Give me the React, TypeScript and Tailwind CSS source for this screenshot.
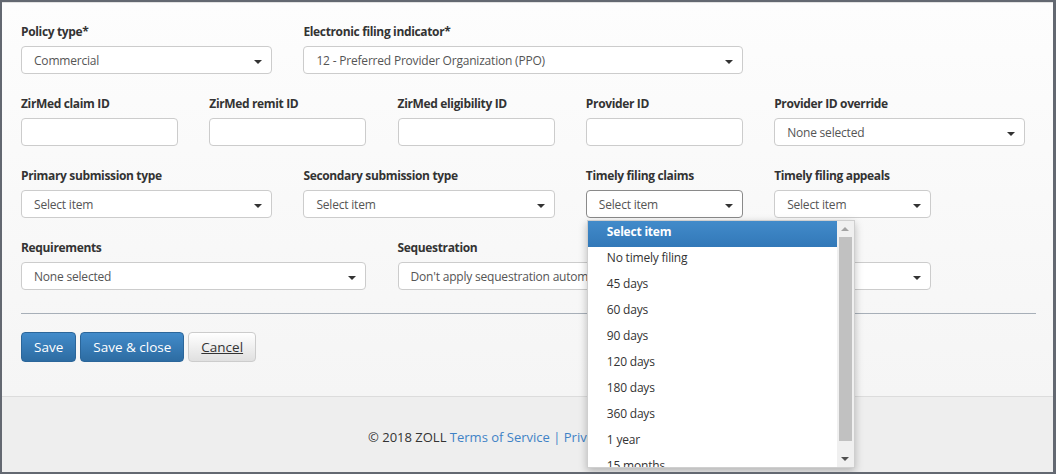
import React from "react";

const font = { fontFamily: '"Open Sans", "Noto Sans", Arial, sans-serif' };

// little filled caret used in every select
function Caret() {
  return (
    <svg width="8" height="4" viewBox="0 0 8 4" className="absolute right-[9px] top-[13px]">
      <path d="M0 0h8L4 4z" fill="#333" />
    </svg>
  );
}

function Select({ value, focused }: { value: string; focused?: boolean }) {
  return (
    <div
      className={`relative h-[28px] rounded-[4px] border bg-white pl-[12px] text-[12px] leading-[27px] tracking-[-0.2px] text-[#555] ${
        focused ? "border-[#8a8a8a]" : "border-[#ccc]"
      }`}
    >
      <span className="block overflow-hidden whitespace-nowrap pr-[24px]">{value}</span>
      <Caret />
    </div>
  );
}

function Input() {
  return <div className="h-[28px] rounded-[4px] border border-[#ccc] bg-white" />;
}

function Field({ label, span, children }: { label: string; span: string; children: React.ReactNode }) {
  return (
    <div className={`relative ${span}`}>
      <div className="mb-[5px] h-[20px] pt-[1px] text-[12px] font-bold leading-[20px] tracking-[-0.35px] text-[#333]">
        {label}
      </div>
      {children}
    </div>
  );
}

const options = [
  "No timely filing",
  "45 days",
  "60 days",
  "90 days",
  "120 days",
  "180 days",
  "360 days",
  "1 year",
  "15 months",
];

function Dropdown() {
  return (
    <div className="absolute left-[1px] top-[100%] z-10 mt-[2px] flex h-[248px] w-[268px] overflow-hidden border border-[#cfcfcf] bg-white shadow-[0_3px_8px_rgba(0,0,0,0.25)]">
      <div className="flex-1 tracking-[-0.2px]">
        <div className="h-[26px] bg-gradient-to-b from-[#428bca] to-[#3278b8] pl-[19px] text-[12px] font-bold leading-[21px] text-white">
          Select item
        </div>
        {options.map((o) => (
          <div key={o} className="h-[26px] pl-[19px] text-[12px] leading-[22px] text-[#333]">
            {o}
          </div>
        ))}
      </div>
      {/* scrollbar */}
      <div className="flex w-[17px] flex-col items-center bg-[#f0f0f0]">
        <svg width="8" height="4" viewBox="0 0 8 4" className="mt-[6px]">
          <path d="M4 0l4 4H0z" fill="#a3a3a3" />
        </svg>
        <div className="mt-[6px] h-[204px] w-[13px] bg-[#c1c1c1]" />
        <div className="flex-1" />
        <svg width="8" height="4" viewBox="0 0 8 4" className="mb-[6px]">
          <path d="M0 0h8L4 4z" fill="#505050" />
        </svg>
      </div>
    </div>
  );
}

export default function App() {
  return (
    <div
      style={font}
      className="flex h-[474px] w-[1056px] flex-col overflow-hidden border-b-2 border-l-2 border-r-[3px] border-t-2 border-[#636871] bg-[#eeeeee]"
    >
      {/* form panel */}
      <div className="border-b border-t border-b-[#dcdcdc] border-t-[#e2e2e2] bg-gradient-to-b from-[#fdfdfd] to-[#f5f5f5] pb-[34px] pl-[19px] pr-[17px] pt-[18px]">
        <div className="grid grid-cols-[repeat(12,62.9px)] gap-x-[31.25px] gap-y-[19px]">
          <Field label="Policy type*" span="col-span-3">
            <Select value="Commercial" />
          </Field>
          <Field label="Electronic filing indicator*" span="col-span-5">
            <Select value="12 - Preferred Provider Organization (PPO)" />
          </Field>
          <div className="col-span-4" />

          <Field label="ZirMed claim ID" span="col-span-2">
            <Input />
          </Field>
          <Field label="ZirMed remit ID" span="col-span-2">
            <Input />
          </Field>
          <Field label="ZirMed eligibility ID" span="col-span-2">
            <Input />
          </Field>
          <Field label="Provider ID" span="col-span-2">
            <Input />
          </Field>
          <Field label="Provider ID override" span="col-span-3">
            <Select value="None selected" />
          </Field>
          <div className="col-span-1" />

          <Field label="Primary submission type" span="col-span-3">
            <Select value="Select item" />
          </Field>
          <Field label="Secondary submission type" span="col-span-3">
            <Select value="Select item" />
          </Field>
          <Field label="Timely filing claims" span="col-span-2 z-10">
            <Select value="Select item" focused />
            <Dropdown />
          </Field>
          <Field label="Timely filing appeals" span="col-span-2">
            <Select value="Select item" />
          </Field>
          <div className="col-span-2" />

          <Field label="Requirements" span="col-span-4">
            <Select value="None selected" />
          </Field>
          <Field label="Sequestration" span="col-span-6">
            <Select value="Don't apply sequestration automatically" />
          </Field>
        </div>

        <div className="mt-[23px] border-t border-[#a7afb8]" />

        <div className="mt-[18px] flex gap-[4px] text-[13.5px]">
          <button className="h-[30px] rounded-[4px] border border-[#2b669a] bg-gradient-to-b from-[#428bca] to-[#2d6ca2] px-[12px] text-white">
            Save
          </button>
          <button className="h-[30px] rounded-[4px] border border-[#2b669a] bg-gradient-to-b from-[#428bca] to-[#2d6ca2] px-[12px] text-white">
            Save &amp; close
          </button>
          <button className="h-[30px] rounded-[4px] border border-[#ccc] bg-gradient-to-b from-white to-[#e0e0e0] px-[12px] text-[#333] underline">
            Cancel
          </button>
        </div>
      </div>

      {/* footer */}
      <div className="flex flex-1 items-center justify-center pr-[42px] pt-[7px] text-[13px] text-[#333]">
        <span>
          © 2018 ZOLL <a className="text-[#3f82c6]">Terms of Service</a>{" "}
          <span className="text-[#3f82c6]">|</span> <a className="text-[#3f82c6]">Privacy Policy</a>
        </span>
      </div>
    </div>
  );
}
